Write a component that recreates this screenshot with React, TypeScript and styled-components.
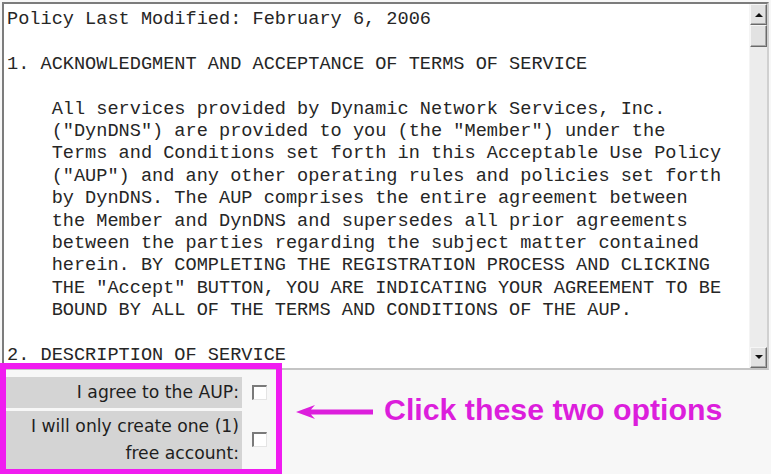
import React from "react";
import styled, { createGlobalStyle } from "styled-components";

const GlobalStyle = createGlobalStyle`
  html, body {
    margin: 0;
    padding: 0;
    background: #f7f7f7;
  }
  body {
    width: 771px;
    height: 474px;
    overflow: hidden;
  }
`;

const magenta = "#f01cf0";

const Page = styled.div`
  display: flex;
  flex-direction: column;
  width: 771px;
  height: 474px;
  padding-top: 2px;
  box-sizing: border-box;
`;

// the old-style scrolling textarea with the AUP
const PolicyFrame = styled.div`
  display: flex;
  margin: 0 2px;
  height: 368px;
  box-sizing: border-box;
  background: #fff;
  border-style: solid;
  border-width: 2px;
  border-color: #7c7c7c #d0d0d0 #c4c4c4 #7c7c7c;
`;

const PolicyText = styled.pre`
  flex: 1;
  margin: 0;
  padding: 5px 0 0 3px;
  overflow: hidden;
  font-family: "Liberation Mono", "Courier New", monospace;
  font-size: 18.6px;
  line-height: 22.4px;
  color: #262626;
  white-space: pre;
`;

const ScrollBar = styled.div`
  display: flex;
  flex-direction: column;
  width: 17px;
  background: #ececec;
  border-left: 1px solid #f4f4f4;
`;

const ScrollButton = styled.div<{ $down?: boolean }>`
  display: flex;
  align-items: center;
  justify-content: center;
  height: 21px;
  box-sizing: border-box;
  background: #e2e2e2;
  border-style: solid;
  border-width: 1px;
  border-color: #f6f6f6 #6a6a6a #6a6a6a #f6f6f6;
  box-shadow: inset -1px -1px 0 #a8a8a8;

  &::after {
    content: "";
    width: 0;
    height: 0;
    border-left: 4px solid transparent;
    border-right: 4px solid transparent;
    ${(p) =>
      p.$down ? "border-top: 4px solid #111;" : "border-bottom: 4px solid #111;"}
  }
`;

const Thumb = styled.div`
  height: 22px;
  box-sizing: border-box;
  background: #e2e2e2;
  border-style: solid;
  border-width: 1px;
  border-color: #f6f6f6 #6a6a6a #6a6a6a #f6f6f6;
  box-shadow: inset -1px -1px 0 #a8a8a8;
`;

const Track = styled.div`
  flex: 1;
`;

const BottomRow = styled.div`
  display: flex;
  align-items: flex-start;
  margin-top: -7px;
  position: relative;
  z-index: 1;
`;

const AgreeBox = styled.div`
  display: grid;
  grid-template-columns: 236px 15px;
  column-gap: 10px;
  row-gap: 3px;
  align-items: center;
  width: 282px;
  box-sizing: border-box;
  padding: 8px 0 0 0;
  border: 6px solid ${magenta};
`;

const Label = styled.label`
  align-self: stretch;
  display: flex;
  flex-direction: column;
  justify-content: center;
  padding: 2px 3px 2px 0;
  background: #d4d4d4;
  text-align: right;
  font-family: "DejaVu Sans", Verdana, sans-serif;
  font-size: 17.2px;
  line-height: 27px;
  color: #1e1e1e;
`;

const LabelLine = styled.span`
  display: block;
`;

const Check = styled.input.attrs({ type: "checkbox" })`
  appearance: none;
  margin: 0;
  width: 15px;
  height: 15px;
  box-sizing: border-box;
  background: #fff;
  border-style: solid;
  border-width: 2px 1px 1px 2px;
  border-color: #7a7a7a #e4e4e4 #e4e4e4 #7a7a7a;
`;

const Callout = styled.div`
  display: flex;
  align-items: center;
  gap: 11px;
  margin: 30px 0 0 14px;
`;

const Arrow = styled.svg`
  margin-top: 5px;
  flex-shrink: 0;
`;

const CalloutText = styled.span`
  font-family: "Liberation Sans", Arial, sans-serif;
  font-weight: bold;
  font-size: 30.3px;
  line-height: 34px;
  color: #dc1edc;
`;

const policyLines = [
  "Policy Last Modified: February 6, 2006",
  "",
  "1. ACKNOWLEDGMENT AND ACCEPTANCE OF TERMS OF SERVICE",
  "",
  "    All services provided by Dynamic Network Services, Inc.",
  '    ("DynDNS") are provided to you (the "Member") under the',
  "    Terms and Conditions set forth in this Acceptable Use Policy",
  '    ("AUP") and any other operating rules and policies set forth',
  "    by DynDNS. The AUP comprises the entire agreement between",
  "    the Member and DynDNS and supersedes all prior agreements",
  "    between the parties regarding the subject matter contained",
  "    herein. BY COMPLETING THE REGISTRATION PROCESS AND CLICKING",
  '    THE "Accept" BUTTON, YOU ARE INDICATING YOUR AGREEMENT TO BE',
  "    BOUND BY ALL OF THE TERMS AND CONDITIONS OF THE AUP.",
  "",
  "2. DESCRIPTION OF SERVICE",
];

export default function App() {
  return (
    <>
      <GlobalStyle />
      <Page>
        <PolicyFrame>
          <PolicyText>{policyLines.join("\n")}</PolicyText>
          <ScrollBar>
            <ScrollButton />
            <Thumb />
            <Track />
            <ScrollButton $down />
          </ScrollBar>
        </PolicyFrame>

        <BottomRow>
          <AgreeBox>
            <Label htmlFor="aup">I agree to the AUP:</Label>
            <Check id="aup" />
            <Label htmlFor="one">
              <LabelLine>I will only create one (1)</LabelLine>
              <LabelLine>free account:</LabelLine>
            </Label>
            <Check id="one" />
          </AgreeBox>

          <Callout>
            <Arrow width="77" height="16" viewBox="0 0 77 16">
              <path d="M0 8 L19 1 L15 5.5 H77 V10.5 H15 L19 15 Z" fill="#dc1edc" />
            </Arrow>
            <CalloutText>Click these two options</CalloutText>
          </Callout>
        </BottomRow>
      </Page>
    </>
  );
}
